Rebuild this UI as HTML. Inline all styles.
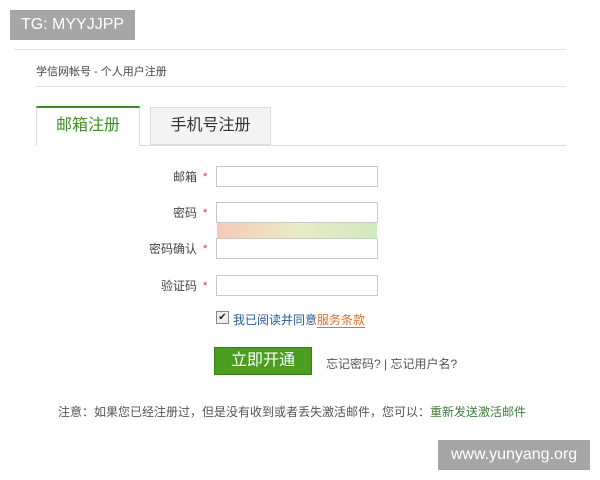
<!DOCTYPE html>
<html><head><meta charset="utf-8"><style>
body{margin:0;width:600px;height:480px;background:#fff;position:relative;overflow:hidden;font-family:"Liberation Sans","Noto Sans CJK SC",sans-serif;color:#333}
.a{position:absolute}
.in{position:absolute;left:216px;width:160px;height:19px;border:1px solid #c8c8c8;background:#fff}
.lb{position:absolute;right:403px;font-size:12px;color:#444}
.st{position:absolute;left:203px;font-size:11px;color:#d33}
</style></head><body>
<div class="a" style="left:10px;top:10px;width:125px;height:30px;background:#a6a6a6;color:#fff;font-size:16px;line-height:30px;text-align:center">TG: MYYJJPP</div>
<div class="a" style="left:14px;top:49px;width:552px;height:1px;background:#e2e2e2"></div>
<div class="a" style="left:36px;top:63px;font-size:11px;color:#444">学信网帐号 - 个人用户注册</div>
<div class="a" style="left:36px;top:86px;width:530px;height:1px;background:#e2e2e2"></div>
<div class="a" style="left:36px;top:106px;width:104px;height:40px;border-top:2px solid #3a8a28;border-left:1px solid #ddd;border-right:1px solid #ddd;background:#fff;box-sizing:border-box;font-size:16px;color:#3d8f25;text-align:center;line-height:36px;z-index:2">邮箱注册</div>
<div class="a" style="left:150px;top:107px;width:121px;height:38px;border:1px solid #ddd;background:#f4f4f4;box-sizing:border-box;font-size:16px;color:#333;text-align:center;line-height:36px">手机号注册</div>
<div class="a" style="left:36px;top:145px;width:530px;height:1px;background:#ddd"></div>
<div class="lb" style="top:168px">邮箱</div><div class="st" style="top:171px">*</div><div class="in" style="top:166px"></div>
<div class="lb" style="top:204px">密码</div><div class="st" style="top:207px">*</div><div class="in" style="top:202px"></div>
<div class="a" style="left:217px;top:223px;width:160px;height:15px;background:linear-gradient(90deg,#f7c9b8,#e8ecc8 50%,#cfe9c0)"></div>
<div class="lb" style="top:240px">密码确认</div><div class="st" style="top:243px">*</div><div class="in" style="top:238px"></div>
<div class="lb" style="top:277px">验证码</div><div class="st" style="top:280px">*</div><div class="in" style="top:275px"></div>
<div class="a" style="left:216px;top:311px;width:11px;height:11px;border:1px solid #888;background:#eee;font-size:10px;line-height:11px;text-align:center;color:#222">✔</div>
<div class="a" style="left:233px;top:311px;font-size:12px;color:#2a5a9a">我已阅读并同意<span style="color:#e0702a;border-bottom:1px solid #e0702a">服务条款</span></div>
<div class="a" style="left:214px;top:347px;width:98px;height:28px;background:#4c9e20;border:1px solid #3b7e18;box-sizing:border-box;color:#fff;font-size:16px;line-height:26px;text-align:center">立即开通</div>
<div class="a" style="left:326px;top:355px;font-size:12px;color:#555">忘记密码? | 忘记用户名?</div>
<div class="a" style="left:58px;top:403px;font-size:12px;color:#555">注意：如果您已经注册过，但是没有收到或者丢失激活邮件，您可以：<span style="color:#3d7f3a">重新发送激活邮件</span></div>
<div class="a" style="left:438px;top:440px;width:152px;height:30px;background:#a6a6a6;color:#fff;font-size:16px;line-height:30px;text-align:center">www.yunyang.org</div>
</body></html>
